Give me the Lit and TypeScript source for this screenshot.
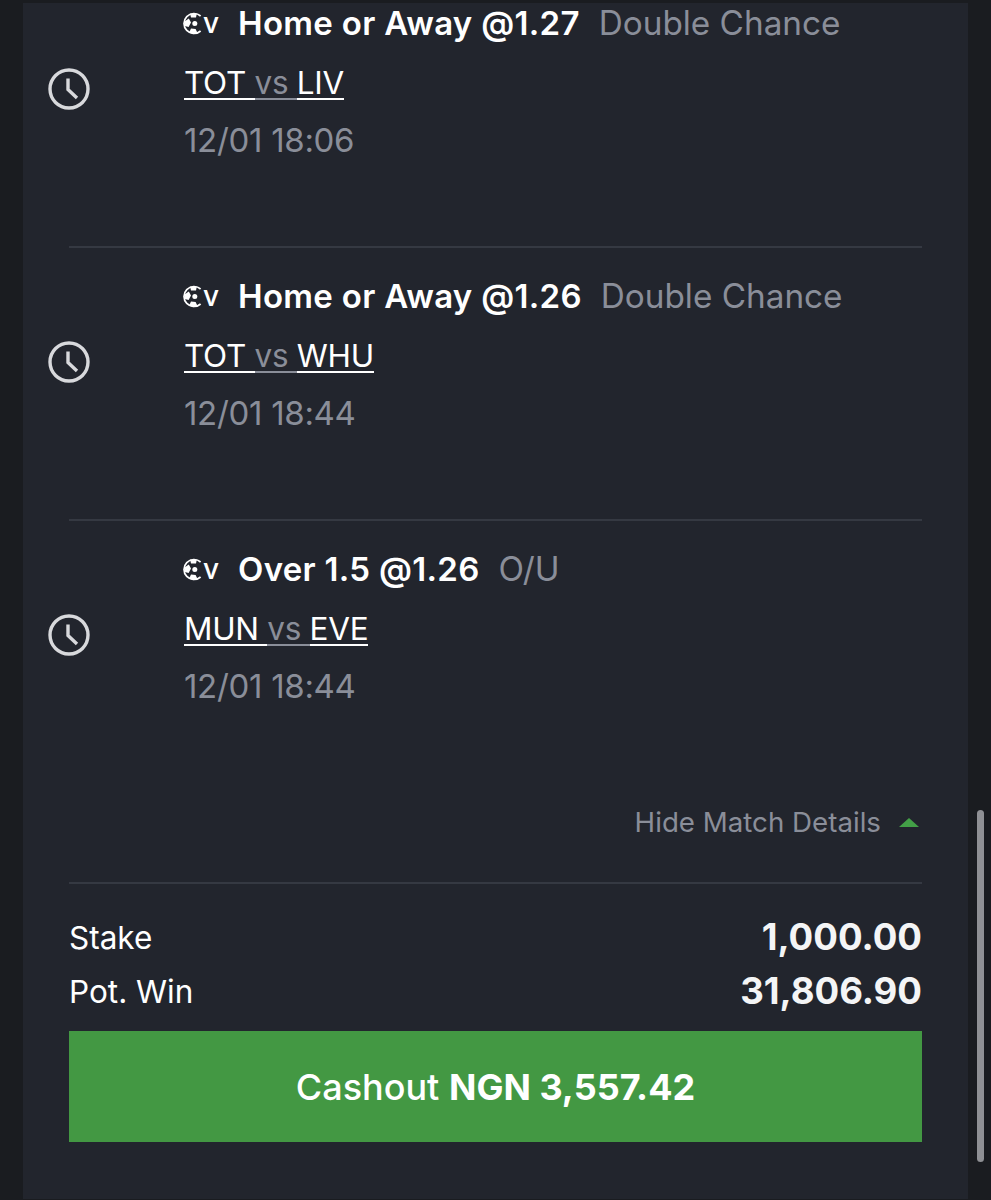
import { LitElement, html, css, svg } from "lit";
import { customElement } from "lit/decorators.js";

const clock = html`<svg class="clock" viewBox="0 0 42 42" width="42" height="42" aria-hidden="true">
  <circle cx="21" cy="21" r="19" fill="none" stroke="#d8d9dc" stroke-width="3.4"></circle>
  <path d="M20 10.5V21.5L29 30" fill="none" stroke="#d8d9dc" stroke-width="3.4"></path>
</svg>`;

const ball = html`<svg class="ball" viewBox="0 0 21 23" width="21" height="23" aria-hidden="true">
  ${svg`<path d="M17.6 4A10 10 0 1 0 17.6 19" fill="none" stroke="#fff" stroke-width="1.7"></path>
  <circle cx="11.8" cy="11.6" r="2.5" fill="#fff"></circle>
  <path d="M1.4 9.4L5.8 6.6L8 10.4L5.6 15L1.6 14Z" fill="#fff"></path>
  <path d="M7 1.6L13.8 1.6L13 5.4H8Z" fill="#fff"></path>
  <path d="M6 20.8L8 16.6L12.6 17L14.4 20.8L10 22.2Z" fill="#fff"></path>`}
</svg>`;

interface Bet {
  pick: string;
  market: string;
  home: string;
  away: string;
  time: string;
}

const bets: Bet[] = [
  { pick: "Home or Away @1.27", market: "Double Chance", home: "TOT", away: "LIV", time: "12/01 18:06" },
  { pick: "Home or Away @1.26", market: "Double Chance", home: "TOT", away: "WHU", time: "12/01 18:44" },
  { pick: "Over 1.5 @1.26", market: "O/U", home: "MUN", away: "EVE", time: "12/01 18:44" },
];

@customElement("app-root")
export class AppRoot extends LitElement {
  static styles = css`
    :host {
      display: block;
      width: 991px;
      height: 1200px;
      overflow: hidden;
      position: relative;
      background: #1a1c20;
      font-family: Inter, "Liberation Sans", sans-serif;
      color: #fff;
    }
    .card {
      box-sizing: border-box;
      width: 945px;
      height: 1196px;
      margin: 4px 0 0 23px;
      padding: 0 46px;
      background: #22252d;
    }
    .list {
      margin-top: -1px;
    }
    .bet {
      height: 243px;
      margin-left: -21px;
      display: grid;
      grid-template-columns: 136px 1fr;
      grid-template-rows: 40px 78px 38px;
      align-content: start;
    }
    .clock {
      grid-column: 1;
      grid-row: 1 / 4;
      align-self: center;
      margin-top: 16px;
    }
    .head {
      grid-column: 2;
      display: flex;
      align-items: center;
      height: 40px;
    }
    .ball {
      flex: none;
      margin-left: -1px;
    }
    .v {
      font-size: 28px;
      font-weight: 500;
      line-height: 1;
      width: 35px;
      margin-left: -1px;
    }
    .pick {
      font-size: 33px;
      font-weight: 600;
      letter-spacing: 0.3px;
      white-space: nowrap;
    }
    .market {
      margin-left: 19px;
      font-size: 33.3px;
      font-weight: 400;
      color: #8a8e99;
      white-space: nowrap;
    }
    .teams {
      grid-column: 2;
      align-self: center;
      justify-self: start;
      font-size: 31.5px;
      letter-spacing: -0.3px;
      line-height: 30px;
      border-bottom: 2px solid #fff;
      position: relative;
      white-space: pre;
      margin-top: 4px;
    }
    .vs {
      color: #8a8e99;
      position: relative;
      display: inline-block;
    }
    .vs::after {
      content: "";
      position: absolute;
      left: 0;
      right: 0;
      bottom: -2px;
      height: 2px;
      background: #8a8e99;
    }
    .time {
      grid-column: 2;
      align-self: center;
      font-size: 33px;
      letter-spacing: -0.3px;
      color: #8a8e99;
    }
    hr {
      border: 0;
      height: 2px;
      margin: 0;
      background: #353942;
    }
    .list hr {
      margin-bottom: 28px;
    }
    .toggle {
      display: flex;
      justify-content: flex-end;
      align-items: center;
      height: 40px;
      margin-top: 10px;
      padding-right: 3px;
      font-size: 27.7px;
      color: #8a8e99;
    }
    .tri {
      width: 0;
      height: 0;
      margin-left: 18px;
      border-left: 10px solid transparent;
      border-right: 10px solid transparent;
      border-bottom: 9px solid #43a047;
    }
    .divider {
      margin-top: 40px;
    }
    .totals {
      padding-top: 26px;
    }
    .line {
      display: flex;
      justify-content: space-between;
      align-items: center;
      height: 54px;
      font-size: 31.5px;
    }
    .amount {
      font-size: 36.6px;
      font-weight: 700;
      color: #f4f5f6;
    }
    .cashout {
      display: flex;
      justify-content: center;
      align-items: center;
      height: 111px;
      margin-top: 13px;
      background: #439843;
      font-size: 36px;
      font-weight: 500;
      white-space: pre;
    }
    .cashout b {
      font-weight: 700;
    }
    .scroll {
      position: absolute;
      left: 977px;
      top: 810px;
      width: 7px;
      height: 352px;
      border-radius: 4px;
      background: #8f9094;
    }
  `;

  render() {
    return html`
      <div class="card">
        <div class="list">
          ${bets.map(
            (b, i) => html`
              ${i ? html`<hr />` : ""}
              <section class="bet">
                ${clock}
                <div class="head">
                  ${ball}<span class="v">v</span>
                  <span class="pick">${b.pick}</span>
                  <span class="market">${b.market}</span>
                </div>
                <div class="teams">${b.home} <span class="vs">vs </span>${b.away}</div>
                <div class="time">${b.time}</div>
              </section>
            `
          )}
        </div>
        <div class="toggle">Hide Match Details<span class="tri"></span></div>
        <hr class="divider" />
        <div class="totals">
          <div class="line"><span>Stake</span><span class="amount">1,000.00</span></div>
          <div class="line"><span>Pot. Win</span><span class="amount">31,806.90</span></div>
        </div>
        <div class="cashout">Cashout <b>NGN 3,557.42</b></div>
      </div>
      <div class="scroll"></div>
    `;
  }
}
